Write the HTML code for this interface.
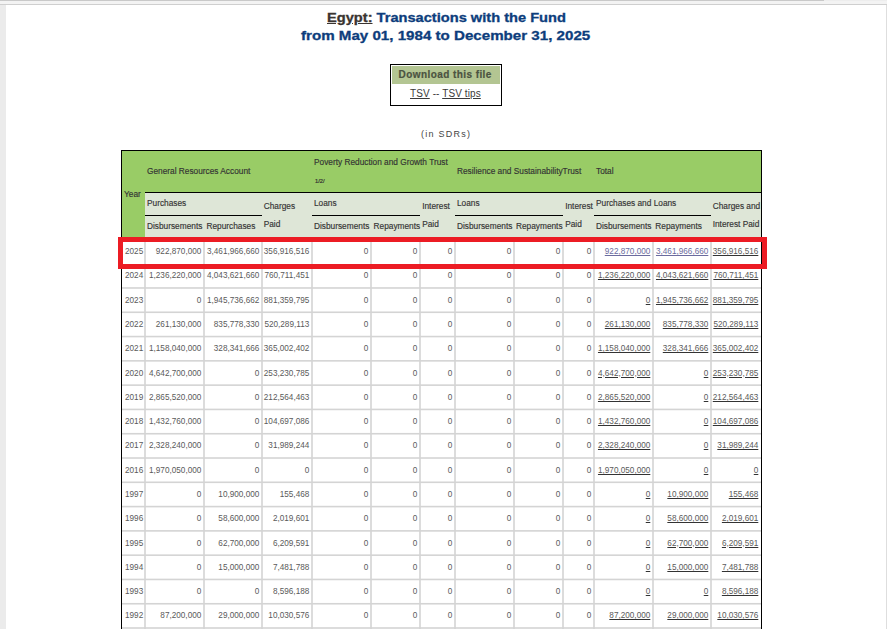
<!DOCTYPE html>
<html><head><meta charset="utf-8"><style>
html,body{margin:0;padding:0;width:887px;height:629px;overflow:hidden;background:#fff}
body>div{position:absolute}
.t{position:absolute;white-space:nowrap;font-family:"Liberation Sans", sans-serif}
</style></head><body>
<div style="left:0px;top:0px;width:887px;height:629px;background:#ffffff"></div>
<div style="left:0px;top:0px;width:824px;height:1px;background:#c9c9c9"></div>
<div style="left:824px;top:0px;width:63px;height:1px;background:#ededed"></div>
<div style="left:0px;top:1px;width:887px;height:3px;background:#f3f3f3"></div>
<div style="left:0px;top:4px;width:887px;height:1px;background:#cfcfcf"></div>
<div style="left:0px;top:5px;width:6px;height:624px;background:#ebebeb"></div>
<div style="left:886px;top:5px;width:1px;height:624px;background:#dedede"></div>
<div class="t" style="left:327.00px;top:12.02px;font-size:12.5px;line-height:12.5px;color:#0d3d7c;font-weight:700;letter-spacing:0px;-webkit-text-stroke:0.3px;transform:scaleX(1.17);transform-origin:0 0"><span style="color:#3a3430;text-decoration:underline">Egypt:</span> Transactions with the Fund</div>
<div class="t" style="left:301.00px;top:30.42px;font-size:12.5px;line-height:12.5px;color:#0d3d7c;font-weight:700;letter-spacing:0px;-webkit-text-stroke:0.3px;transform:scaleX(1.21);transform-origin:0 0">from May 01, 1984 to December 31, 2025</div>
<div style="left:390px;top:64px;width:112px;height:42px;background:#000"></div>
<div style="left:391px;top:65px;width:110px;height:40px;background:#fff"></div>
<div style="left:392px;top:66px;width:108px;height:18px;background:#b3c592"></div>
<div class="t" style="left:398.50px;top:69.83px;font-size:10px;line-height:10px;color:#4b5341;font-weight:700;letter-spacing:0.43px;-webkit-text-stroke:0.2px #4b5341">Download this file</div>
<div class="t" style="left:410.00px;top:89.44px;font-size:10px;line-height:10px;color:#3a3a3a;font-weight:400;letter-spacing:0.1px;"><u>TSV</u> -- <u>TSV tips</u></div>
<div class="t" style="left:421.00px;top:129.78px;font-size:9px;line-height:9px;color:#444;font-weight:400;letter-spacing:1.25px;">(in SDRs)</div>
<div style="left:121px;top:150px;width:641px;height:479px;background:#000"></div>
<div style="left:122px;top:151px;width:639px;height:478px;background:#fff"></div>
<div style="left:122px;top:151px;width:639px;height:41px;background:#99cc66"></div>
<div style="left:122px;top:151px;width:23px;height:88px;background:#99cc66"></div>
<div style="left:145px;top:192px;width:616px;height:1px;background:#000"></div>
<div style="left:145px;top:193px;width:616px;height:46px;background:#dee6d7"></div>
<div style="left:145px;top:215px;width:117px;height:1px;background:#000"></div>
<div style="left:312px;top:215px;width:108px;height:1px;background:#000"></div>
<div style="left:455px;top:215px;width:108px;height:1px;background:#000"></div>
<div style="left:594px;top:215px;width:117px;height:1px;background:#000"></div>
<div class="t" style="left:147.00px;top:167.47px;font-size:8.3px;line-height:8.3px;color:#333;font-weight:400;letter-spacing:0px;-webkit-text-stroke:0.15px #333">General Resources Account</div>
<div class="t" style="left:314.00px;top:158.07px;font-size:8.3px;line-height:8.3px;color:#333;font-weight:400;letter-spacing:0px;-webkit-text-stroke:0.15px #333">Poverty Reduction and Growth Trust</div>
<div class="t" style="left:315.00px;top:178.99px;font-size:5.8px;line-height:5.8px;color:#333;font-weight:400;letter-spacing:0px;-webkit-text-stroke:0.2px #333">1/2/</div>
<div class="t" style="left:457.00px;top:167.17px;font-size:8.3px;line-height:8.3px;color:#333;font-weight:400;letter-spacing:0px;-webkit-text-stroke:0.15px #333">Resilience and SustainabilityTrust</div>
<div class="t" style="left:596.00px;top:167.17px;font-size:8.3px;line-height:8.3px;color:#333;font-weight:400;letter-spacing:0px;-webkit-text-stroke:0.15px #333">Total</div>
<div class="t" style="left:124.00px;top:190.37px;font-size:8.3px;line-height:8.3px;color:#333;font-weight:400;letter-spacing:0px;-webkit-text-stroke:0.15px #333">Year</div>
<div class="t" style="left:147.00px;top:199.27px;font-size:8.3px;line-height:8.3px;color:#333;font-weight:400;letter-spacing:0px;-webkit-text-stroke:0.15px #333">Purchases</div>
<div class="t" style="left:314.00px;top:199.27px;font-size:8.3px;line-height:8.3px;color:#333;font-weight:400;letter-spacing:0px;-webkit-text-stroke:0.15px #333">Loans</div>
<div class="t" style="left:457.00px;top:199.27px;font-size:8.3px;line-height:8.3px;color:#333;font-weight:400;letter-spacing:0px;-webkit-text-stroke:0.15px #333">Loans</div>
<div class="t" style="left:596.00px;top:199.27px;font-size:8.3px;line-height:8.3px;color:#333;font-weight:400;letter-spacing:0px;-webkit-text-stroke:0.15px #333">Purchases and Loans</div>
<div class="t" style="left:147.00px;top:222.17px;font-size:8.3px;line-height:8.3px;color:#333;font-weight:400;letter-spacing:0px;-webkit-text-stroke:0.15px #333">Disbursements</div>
<div class="t" style="left:206.50px;top:222.17px;font-size:8.3px;line-height:8.3px;color:#333;font-weight:400;letter-spacing:0px;-webkit-text-stroke:0.15px #333">Repurchases</div>
<div class="t" style="left:314.00px;top:222.17px;font-size:8.3px;line-height:8.3px;color:#333;font-weight:400;letter-spacing:0px;-webkit-text-stroke:0.15px #333">Disbursements</div>
<div class="t" style="left:373.60px;top:222.17px;font-size:8.3px;line-height:8.3px;color:#333;font-weight:400;letter-spacing:0px;-webkit-text-stroke:0.15px #333">Repayments</div>
<div class="t" style="left:457.00px;top:222.17px;font-size:8.3px;line-height:8.3px;color:#333;font-weight:400;letter-spacing:0px;-webkit-text-stroke:0.15px #333">Disbursements</div>
<div class="t" style="left:516.00px;top:222.17px;font-size:8.3px;line-height:8.3px;color:#333;font-weight:400;letter-spacing:0px;-webkit-text-stroke:0.15px #333">Repayments</div>
<div class="t" style="left:596.00px;top:222.17px;font-size:8.3px;line-height:8.3px;color:#333;font-weight:400;letter-spacing:0px;-webkit-text-stroke:0.15px #333">Disbursements</div>
<div class="t" style="left:655.30px;top:222.17px;font-size:8.3px;line-height:8.3px;color:#333;font-weight:400;letter-spacing:0px;-webkit-text-stroke:0.15px #333">Repayments</div>
<div class="t" style="left:263.70px;top:201.87px;font-size:8.3px;line-height:8.3px;color:#333;font-weight:400;letter-spacing:0px;-webkit-text-stroke:0.15px #333">Charges</div>
<div class="t" style="left:263.70px;top:220.17px;font-size:8.3px;line-height:8.3px;color:#333;font-weight:400;letter-spacing:0px;-webkit-text-stroke:0.15px #333">Paid</div>
<div class="t" style="left:422.20px;top:201.87px;font-size:8.3px;line-height:8.3px;color:#333;font-weight:400;letter-spacing:0px;-webkit-text-stroke:0.15px #333">Interest</div>
<div class="t" style="left:422.20px;top:220.17px;font-size:8.3px;line-height:8.3px;color:#333;font-weight:400;letter-spacing:0px;-webkit-text-stroke:0.15px #333">Paid</div>
<div class="t" style="left:565.20px;top:201.87px;font-size:8.3px;line-height:8.3px;color:#333;font-weight:400;letter-spacing:0px;-webkit-text-stroke:0.15px #333">Interest</div>
<div class="t" style="left:565.20px;top:220.17px;font-size:8.3px;line-height:8.3px;color:#333;font-weight:400;letter-spacing:0px;-webkit-text-stroke:0.15px #333">Paid</div>
<div class="t" style="left:712.70px;top:201.87px;font-size:8.3px;line-height:8.3px;color:#333;font-weight:400;letter-spacing:0px;-webkit-text-stroke:0.15px #333">Charges and</div>
<div class="t" style="left:712.70px;top:220.17px;font-size:8.3px;line-height:8.3px;color:#333;font-weight:400;letter-spacing:0px;-webkit-text-stroke:0.15px #333">Interest Paid</div>
<div class="t" style="left:125.00px;top:248.06px;font-size:8.2px;line-height:8.2px;color:#5a5a5a;font-weight:400;letter-spacing:0px;">2025</div>
<div class="t" style="right:685.70px;top:248.06px;font-size:8.2px;line-height:8.2px;color:#5a5a5a;font-weight:400;letter-spacing:0px;">922,870,000</div>
<div class="t" style="right:627.70px;top:248.06px;font-size:8.2px;line-height:8.2px;color:#5a5a5a;font-weight:400;letter-spacing:0px;">3,461,966,660</div>
<div class="t" style="right:577.70px;top:248.06px;font-size:8.2px;line-height:8.2px;color:#5a5a5a;font-weight:400;letter-spacing:0px;">356,916,516</div>
<div class="t" style="right:518.70px;top:248.06px;font-size:8.2px;line-height:8.2px;color:#5a5a5a;font-weight:400;letter-spacing:0px;">0</div>
<div class="t" style="right:469.70px;top:248.06px;font-size:8.2px;line-height:8.2px;color:#5a5a5a;font-weight:400;letter-spacing:0px;">0</div>
<div class="t" style="right:434.70px;top:248.06px;font-size:8.2px;line-height:8.2px;color:#5a5a5a;font-weight:400;letter-spacing:0px;">0</div>
<div class="t" style="right:375.70px;top:248.06px;font-size:8.2px;line-height:8.2px;color:#5a5a5a;font-weight:400;letter-spacing:0px;">0</div>
<div class="t" style="right:326.70px;top:248.06px;font-size:8.2px;line-height:8.2px;color:#5a5a5a;font-weight:400;letter-spacing:0px;">0</div>
<div class="t" style="right:295.70px;top:248.06px;font-size:8.2px;line-height:8.2px;color:#5a5a5a;font-weight:400;letter-spacing:0px;">0</div>
<div class="t" style="right:236.70px;top:248.06px;font-size:8.2px;line-height:8.2px;color:#6b6b9e;font-weight:400;letter-spacing:0px;"><span style="text-decoration:underline;text-decoration-color:#6b6b9e">922,870,000</span></div>
<div class="t" style="right:178.70px;top:248.06px;font-size:8.2px;line-height:8.2px;color:#6b6b9e;font-weight:400;letter-spacing:0px;"><span style="text-decoration:underline;text-decoration-color:#6b6b9e">3,461,966,660</span></div>
<div class="t" style="right:128.70px;top:248.06px;font-size:8.2px;line-height:8.2px;color:#5a5a5a;font-weight:400;letter-spacing:0px;"><span style="text-decoration:underline;text-decoration-color:#333">356,916,516</span></div>
<div class="t" style="left:125.00px;top:272.35px;font-size:8.2px;line-height:8.2px;color:#5a5a5a;font-weight:400;letter-spacing:0px;">2024</div>
<div class="t" style="right:685.70px;top:272.35px;font-size:8.2px;line-height:8.2px;color:#5a5a5a;font-weight:400;letter-spacing:0px;">1,236,220,000</div>
<div class="t" style="right:627.70px;top:272.35px;font-size:8.2px;line-height:8.2px;color:#5a5a5a;font-weight:400;letter-spacing:0px;">4,043,621,660</div>
<div class="t" style="right:577.70px;top:272.35px;font-size:8.2px;line-height:8.2px;color:#5a5a5a;font-weight:400;letter-spacing:0px;">760,711,451</div>
<div class="t" style="right:518.70px;top:272.35px;font-size:8.2px;line-height:8.2px;color:#5a5a5a;font-weight:400;letter-spacing:0px;">0</div>
<div class="t" style="right:469.70px;top:272.35px;font-size:8.2px;line-height:8.2px;color:#5a5a5a;font-weight:400;letter-spacing:0px;">0</div>
<div class="t" style="right:434.70px;top:272.35px;font-size:8.2px;line-height:8.2px;color:#5a5a5a;font-weight:400;letter-spacing:0px;">0</div>
<div class="t" style="right:375.70px;top:272.35px;font-size:8.2px;line-height:8.2px;color:#5a5a5a;font-weight:400;letter-spacing:0px;">0</div>
<div class="t" style="right:326.70px;top:272.35px;font-size:8.2px;line-height:8.2px;color:#5a5a5a;font-weight:400;letter-spacing:0px;">0</div>
<div class="t" style="right:295.70px;top:272.35px;font-size:8.2px;line-height:8.2px;color:#5a5a5a;font-weight:400;letter-spacing:0px;">0</div>
<div class="t" style="right:236.70px;top:272.35px;font-size:8.2px;line-height:8.2px;color:#5a5a5a;font-weight:400;letter-spacing:0px;"><span style="text-decoration:underline;text-decoration-color:#333">1,236,220,000</span></div>
<div class="t" style="right:178.70px;top:272.35px;font-size:8.2px;line-height:8.2px;color:#5a5a5a;font-weight:400;letter-spacing:0px;"><span style="text-decoration:underline;text-decoration-color:#333">4,043,621,660</span></div>
<div class="t" style="right:128.70px;top:272.35px;font-size:8.2px;line-height:8.2px;color:#5a5a5a;font-weight:400;letter-spacing:0px;"><span style="text-decoration:underline;text-decoration-color:#333">760,711,451</span></div>
<div class="t" style="left:125.00px;top:296.64px;font-size:8.2px;line-height:8.2px;color:#5a5a5a;font-weight:400;letter-spacing:0px;">2023</div>
<div class="t" style="right:685.70px;top:296.64px;font-size:8.2px;line-height:8.2px;color:#5a5a5a;font-weight:400;letter-spacing:0px;">0</div>
<div class="t" style="right:627.70px;top:296.64px;font-size:8.2px;line-height:8.2px;color:#5a5a5a;font-weight:400;letter-spacing:0px;">1,945,736,662</div>
<div class="t" style="right:577.70px;top:296.64px;font-size:8.2px;line-height:8.2px;color:#5a5a5a;font-weight:400;letter-spacing:0px;">881,359,795</div>
<div class="t" style="right:518.70px;top:296.64px;font-size:8.2px;line-height:8.2px;color:#5a5a5a;font-weight:400;letter-spacing:0px;">0</div>
<div class="t" style="right:469.70px;top:296.64px;font-size:8.2px;line-height:8.2px;color:#5a5a5a;font-weight:400;letter-spacing:0px;">0</div>
<div class="t" style="right:434.70px;top:296.64px;font-size:8.2px;line-height:8.2px;color:#5a5a5a;font-weight:400;letter-spacing:0px;">0</div>
<div class="t" style="right:375.70px;top:296.64px;font-size:8.2px;line-height:8.2px;color:#5a5a5a;font-weight:400;letter-spacing:0px;">0</div>
<div class="t" style="right:326.70px;top:296.64px;font-size:8.2px;line-height:8.2px;color:#5a5a5a;font-weight:400;letter-spacing:0px;">0</div>
<div class="t" style="right:295.70px;top:296.64px;font-size:8.2px;line-height:8.2px;color:#5a5a5a;font-weight:400;letter-spacing:0px;">0</div>
<div class="t" style="right:236.70px;top:296.64px;font-size:8.2px;line-height:8.2px;color:#5a5a5a;font-weight:400;letter-spacing:0px;"><span style="text-decoration:underline;text-decoration-color:#333">0</span></div>
<div class="t" style="right:178.70px;top:296.64px;font-size:8.2px;line-height:8.2px;color:#5a5a5a;font-weight:400;letter-spacing:0px;"><span style="text-decoration:underline;text-decoration-color:#333">1,945,736,662</span></div>
<div class="t" style="right:128.70px;top:296.64px;font-size:8.2px;line-height:8.2px;color:#5a5a5a;font-weight:400;letter-spacing:0px;"><span style="text-decoration:underline;text-decoration-color:#333">881,359,795</span></div>
<div class="t" style="left:125.00px;top:320.93px;font-size:8.2px;line-height:8.2px;color:#5a5a5a;font-weight:400;letter-spacing:0px;">2022</div>
<div class="t" style="right:685.70px;top:320.93px;font-size:8.2px;line-height:8.2px;color:#5a5a5a;font-weight:400;letter-spacing:0px;">261,130,000</div>
<div class="t" style="right:627.70px;top:320.93px;font-size:8.2px;line-height:8.2px;color:#5a5a5a;font-weight:400;letter-spacing:0px;">835,778,330</div>
<div class="t" style="right:577.70px;top:320.93px;font-size:8.2px;line-height:8.2px;color:#5a5a5a;font-weight:400;letter-spacing:0px;">520,289,113</div>
<div class="t" style="right:518.70px;top:320.93px;font-size:8.2px;line-height:8.2px;color:#5a5a5a;font-weight:400;letter-spacing:0px;">0</div>
<div class="t" style="right:469.70px;top:320.93px;font-size:8.2px;line-height:8.2px;color:#5a5a5a;font-weight:400;letter-spacing:0px;">0</div>
<div class="t" style="right:434.70px;top:320.93px;font-size:8.2px;line-height:8.2px;color:#5a5a5a;font-weight:400;letter-spacing:0px;">0</div>
<div class="t" style="right:375.70px;top:320.93px;font-size:8.2px;line-height:8.2px;color:#5a5a5a;font-weight:400;letter-spacing:0px;">0</div>
<div class="t" style="right:326.70px;top:320.93px;font-size:8.2px;line-height:8.2px;color:#5a5a5a;font-weight:400;letter-spacing:0px;">0</div>
<div class="t" style="right:295.70px;top:320.93px;font-size:8.2px;line-height:8.2px;color:#5a5a5a;font-weight:400;letter-spacing:0px;">0</div>
<div class="t" style="right:236.70px;top:320.93px;font-size:8.2px;line-height:8.2px;color:#5a5a5a;font-weight:400;letter-spacing:0px;"><span style="text-decoration:underline;text-decoration-color:#333">261,130,000</span></div>
<div class="t" style="right:178.70px;top:320.93px;font-size:8.2px;line-height:8.2px;color:#5a5a5a;font-weight:400;letter-spacing:0px;"><span style="text-decoration:underline;text-decoration-color:#333">835,778,330</span></div>
<div class="t" style="right:128.70px;top:320.93px;font-size:8.2px;line-height:8.2px;color:#5a5a5a;font-weight:400;letter-spacing:0px;"><span style="text-decoration:underline;text-decoration-color:#333">520,289,113</span></div>
<div class="t" style="left:125.00px;top:345.22px;font-size:8.2px;line-height:8.2px;color:#5a5a5a;font-weight:400;letter-spacing:0px;">2021</div>
<div class="t" style="right:685.70px;top:345.22px;font-size:8.2px;line-height:8.2px;color:#5a5a5a;font-weight:400;letter-spacing:0px;">1,158,040,000</div>
<div class="t" style="right:627.70px;top:345.22px;font-size:8.2px;line-height:8.2px;color:#5a5a5a;font-weight:400;letter-spacing:0px;">328,341,666</div>
<div class="t" style="right:577.70px;top:345.22px;font-size:8.2px;line-height:8.2px;color:#5a5a5a;font-weight:400;letter-spacing:0px;">365,002,402</div>
<div class="t" style="right:518.70px;top:345.22px;font-size:8.2px;line-height:8.2px;color:#5a5a5a;font-weight:400;letter-spacing:0px;">0</div>
<div class="t" style="right:469.70px;top:345.22px;font-size:8.2px;line-height:8.2px;color:#5a5a5a;font-weight:400;letter-spacing:0px;">0</div>
<div class="t" style="right:434.70px;top:345.22px;font-size:8.2px;line-height:8.2px;color:#5a5a5a;font-weight:400;letter-spacing:0px;">0</div>
<div class="t" style="right:375.70px;top:345.22px;font-size:8.2px;line-height:8.2px;color:#5a5a5a;font-weight:400;letter-spacing:0px;">0</div>
<div class="t" style="right:326.70px;top:345.22px;font-size:8.2px;line-height:8.2px;color:#5a5a5a;font-weight:400;letter-spacing:0px;">0</div>
<div class="t" style="right:295.70px;top:345.22px;font-size:8.2px;line-height:8.2px;color:#5a5a5a;font-weight:400;letter-spacing:0px;">0</div>
<div class="t" style="right:236.70px;top:345.22px;font-size:8.2px;line-height:8.2px;color:#5a5a5a;font-weight:400;letter-spacing:0px;"><span style="text-decoration:underline;text-decoration-color:#333">1,158,040,000</span></div>
<div class="t" style="right:178.70px;top:345.22px;font-size:8.2px;line-height:8.2px;color:#5a5a5a;font-weight:400;letter-spacing:0px;"><span style="text-decoration:underline;text-decoration-color:#333">328,341,666</span></div>
<div class="t" style="right:128.70px;top:345.22px;font-size:8.2px;line-height:8.2px;color:#5a5a5a;font-weight:400;letter-spacing:0px;"><span style="text-decoration:underline;text-decoration-color:#333">365,002,402</span></div>
<div class="t" style="left:125.00px;top:369.51px;font-size:8.2px;line-height:8.2px;color:#5a5a5a;font-weight:400;letter-spacing:0px;">2020</div>
<div class="t" style="right:685.70px;top:369.51px;font-size:8.2px;line-height:8.2px;color:#5a5a5a;font-weight:400;letter-spacing:0px;">4,642,700,000</div>
<div class="t" style="right:627.70px;top:369.51px;font-size:8.2px;line-height:8.2px;color:#5a5a5a;font-weight:400;letter-spacing:0px;">0</div>
<div class="t" style="right:577.70px;top:369.51px;font-size:8.2px;line-height:8.2px;color:#5a5a5a;font-weight:400;letter-spacing:0px;">253,230,785</div>
<div class="t" style="right:518.70px;top:369.51px;font-size:8.2px;line-height:8.2px;color:#5a5a5a;font-weight:400;letter-spacing:0px;">0</div>
<div class="t" style="right:469.70px;top:369.51px;font-size:8.2px;line-height:8.2px;color:#5a5a5a;font-weight:400;letter-spacing:0px;">0</div>
<div class="t" style="right:434.70px;top:369.51px;font-size:8.2px;line-height:8.2px;color:#5a5a5a;font-weight:400;letter-spacing:0px;">0</div>
<div class="t" style="right:375.70px;top:369.51px;font-size:8.2px;line-height:8.2px;color:#5a5a5a;font-weight:400;letter-spacing:0px;">0</div>
<div class="t" style="right:326.70px;top:369.51px;font-size:8.2px;line-height:8.2px;color:#5a5a5a;font-weight:400;letter-spacing:0px;">0</div>
<div class="t" style="right:295.70px;top:369.51px;font-size:8.2px;line-height:8.2px;color:#5a5a5a;font-weight:400;letter-spacing:0px;">0</div>
<div class="t" style="right:236.70px;top:369.51px;font-size:8.2px;line-height:8.2px;color:#5a5a5a;font-weight:400;letter-spacing:0px;"><span style="text-decoration:underline;text-decoration-color:#333">4,642,700,000</span></div>
<div class="t" style="right:178.70px;top:369.51px;font-size:8.2px;line-height:8.2px;color:#5a5a5a;font-weight:400;letter-spacing:0px;"><span style="text-decoration:underline;text-decoration-color:#333">0</span></div>
<div class="t" style="right:128.70px;top:369.51px;font-size:8.2px;line-height:8.2px;color:#5a5a5a;font-weight:400;letter-spacing:0px;"><span style="text-decoration:underline;text-decoration-color:#333">253,230,785</span></div>
<div class="t" style="left:125.00px;top:393.80px;font-size:8.2px;line-height:8.2px;color:#5a5a5a;font-weight:400;letter-spacing:0px;">2019</div>
<div class="t" style="right:685.70px;top:393.80px;font-size:8.2px;line-height:8.2px;color:#5a5a5a;font-weight:400;letter-spacing:0px;">2,865,520,000</div>
<div class="t" style="right:627.70px;top:393.80px;font-size:8.2px;line-height:8.2px;color:#5a5a5a;font-weight:400;letter-spacing:0px;">0</div>
<div class="t" style="right:577.70px;top:393.80px;font-size:8.2px;line-height:8.2px;color:#5a5a5a;font-weight:400;letter-spacing:0px;">212,564,463</div>
<div class="t" style="right:518.70px;top:393.80px;font-size:8.2px;line-height:8.2px;color:#5a5a5a;font-weight:400;letter-spacing:0px;">0</div>
<div class="t" style="right:469.70px;top:393.80px;font-size:8.2px;line-height:8.2px;color:#5a5a5a;font-weight:400;letter-spacing:0px;">0</div>
<div class="t" style="right:434.70px;top:393.80px;font-size:8.2px;line-height:8.2px;color:#5a5a5a;font-weight:400;letter-spacing:0px;">0</div>
<div class="t" style="right:375.70px;top:393.80px;font-size:8.2px;line-height:8.2px;color:#5a5a5a;font-weight:400;letter-spacing:0px;">0</div>
<div class="t" style="right:326.70px;top:393.80px;font-size:8.2px;line-height:8.2px;color:#5a5a5a;font-weight:400;letter-spacing:0px;">0</div>
<div class="t" style="right:295.70px;top:393.80px;font-size:8.2px;line-height:8.2px;color:#5a5a5a;font-weight:400;letter-spacing:0px;">0</div>
<div class="t" style="right:236.70px;top:393.80px;font-size:8.2px;line-height:8.2px;color:#5a5a5a;font-weight:400;letter-spacing:0px;"><span style="text-decoration:underline;text-decoration-color:#333">2,865,520,000</span></div>
<div class="t" style="right:178.70px;top:393.80px;font-size:8.2px;line-height:8.2px;color:#5a5a5a;font-weight:400;letter-spacing:0px;"><span style="text-decoration:underline;text-decoration-color:#333">0</span></div>
<div class="t" style="right:128.70px;top:393.80px;font-size:8.2px;line-height:8.2px;color:#5a5a5a;font-weight:400;letter-spacing:0px;"><span style="text-decoration:underline;text-decoration-color:#333">212,564,463</span></div>
<div class="t" style="left:125.00px;top:418.09px;font-size:8.2px;line-height:8.2px;color:#5a5a5a;font-weight:400;letter-spacing:0px;">2018</div>
<div class="t" style="right:685.70px;top:418.09px;font-size:8.2px;line-height:8.2px;color:#5a5a5a;font-weight:400;letter-spacing:0px;">1,432,760,000</div>
<div class="t" style="right:627.70px;top:418.09px;font-size:8.2px;line-height:8.2px;color:#5a5a5a;font-weight:400;letter-spacing:0px;">0</div>
<div class="t" style="right:577.70px;top:418.09px;font-size:8.2px;line-height:8.2px;color:#5a5a5a;font-weight:400;letter-spacing:0px;">104,697,086</div>
<div class="t" style="right:518.70px;top:418.09px;font-size:8.2px;line-height:8.2px;color:#5a5a5a;font-weight:400;letter-spacing:0px;">0</div>
<div class="t" style="right:469.70px;top:418.09px;font-size:8.2px;line-height:8.2px;color:#5a5a5a;font-weight:400;letter-spacing:0px;">0</div>
<div class="t" style="right:434.70px;top:418.09px;font-size:8.2px;line-height:8.2px;color:#5a5a5a;font-weight:400;letter-spacing:0px;">0</div>
<div class="t" style="right:375.70px;top:418.09px;font-size:8.2px;line-height:8.2px;color:#5a5a5a;font-weight:400;letter-spacing:0px;">0</div>
<div class="t" style="right:326.70px;top:418.09px;font-size:8.2px;line-height:8.2px;color:#5a5a5a;font-weight:400;letter-spacing:0px;">0</div>
<div class="t" style="right:295.70px;top:418.09px;font-size:8.2px;line-height:8.2px;color:#5a5a5a;font-weight:400;letter-spacing:0px;">0</div>
<div class="t" style="right:236.70px;top:418.09px;font-size:8.2px;line-height:8.2px;color:#5a5a5a;font-weight:400;letter-spacing:0px;"><span style="text-decoration:underline;text-decoration-color:#333">1,432,760,000</span></div>
<div class="t" style="right:178.70px;top:418.09px;font-size:8.2px;line-height:8.2px;color:#5a5a5a;font-weight:400;letter-spacing:0px;"><span style="text-decoration:underline;text-decoration-color:#333">0</span></div>
<div class="t" style="right:128.70px;top:418.09px;font-size:8.2px;line-height:8.2px;color:#5a5a5a;font-weight:400;letter-spacing:0px;"><span style="text-decoration:underline;text-decoration-color:#333">104,697,086</span></div>
<div class="t" style="left:125.00px;top:442.38px;font-size:8.2px;line-height:8.2px;color:#5a5a5a;font-weight:400;letter-spacing:0px;">2017</div>
<div class="t" style="right:685.70px;top:442.38px;font-size:8.2px;line-height:8.2px;color:#5a5a5a;font-weight:400;letter-spacing:0px;">2,328,240,000</div>
<div class="t" style="right:627.70px;top:442.38px;font-size:8.2px;line-height:8.2px;color:#5a5a5a;font-weight:400;letter-spacing:0px;">0</div>
<div class="t" style="right:577.70px;top:442.38px;font-size:8.2px;line-height:8.2px;color:#5a5a5a;font-weight:400;letter-spacing:0px;">31,989,244</div>
<div class="t" style="right:518.70px;top:442.38px;font-size:8.2px;line-height:8.2px;color:#5a5a5a;font-weight:400;letter-spacing:0px;">0</div>
<div class="t" style="right:469.70px;top:442.38px;font-size:8.2px;line-height:8.2px;color:#5a5a5a;font-weight:400;letter-spacing:0px;">0</div>
<div class="t" style="right:434.70px;top:442.38px;font-size:8.2px;line-height:8.2px;color:#5a5a5a;font-weight:400;letter-spacing:0px;">0</div>
<div class="t" style="right:375.70px;top:442.38px;font-size:8.2px;line-height:8.2px;color:#5a5a5a;font-weight:400;letter-spacing:0px;">0</div>
<div class="t" style="right:326.70px;top:442.38px;font-size:8.2px;line-height:8.2px;color:#5a5a5a;font-weight:400;letter-spacing:0px;">0</div>
<div class="t" style="right:295.70px;top:442.38px;font-size:8.2px;line-height:8.2px;color:#5a5a5a;font-weight:400;letter-spacing:0px;">0</div>
<div class="t" style="right:236.70px;top:442.38px;font-size:8.2px;line-height:8.2px;color:#5a5a5a;font-weight:400;letter-spacing:0px;"><span style="text-decoration:underline;text-decoration-color:#333">2,328,240,000</span></div>
<div class="t" style="right:178.70px;top:442.38px;font-size:8.2px;line-height:8.2px;color:#5a5a5a;font-weight:400;letter-spacing:0px;"><span style="text-decoration:underline;text-decoration-color:#333">0</span></div>
<div class="t" style="right:128.70px;top:442.38px;font-size:8.2px;line-height:8.2px;color:#5a5a5a;font-weight:400;letter-spacing:0px;"><span style="text-decoration:underline;text-decoration-color:#333">31,989,244</span></div>
<div class="t" style="left:125.00px;top:466.67px;font-size:8.2px;line-height:8.2px;color:#5a5a5a;font-weight:400;letter-spacing:0px;">2016</div>
<div class="t" style="right:685.70px;top:466.67px;font-size:8.2px;line-height:8.2px;color:#5a5a5a;font-weight:400;letter-spacing:0px;">1,970,050,000</div>
<div class="t" style="right:627.70px;top:466.67px;font-size:8.2px;line-height:8.2px;color:#5a5a5a;font-weight:400;letter-spacing:0px;">0</div>
<div class="t" style="right:577.70px;top:466.67px;font-size:8.2px;line-height:8.2px;color:#5a5a5a;font-weight:400;letter-spacing:0px;">0</div>
<div class="t" style="right:518.70px;top:466.67px;font-size:8.2px;line-height:8.2px;color:#5a5a5a;font-weight:400;letter-spacing:0px;">0</div>
<div class="t" style="right:469.70px;top:466.67px;font-size:8.2px;line-height:8.2px;color:#5a5a5a;font-weight:400;letter-spacing:0px;">0</div>
<div class="t" style="right:434.70px;top:466.67px;font-size:8.2px;line-height:8.2px;color:#5a5a5a;font-weight:400;letter-spacing:0px;">0</div>
<div class="t" style="right:375.70px;top:466.67px;font-size:8.2px;line-height:8.2px;color:#5a5a5a;font-weight:400;letter-spacing:0px;">0</div>
<div class="t" style="right:326.70px;top:466.67px;font-size:8.2px;line-height:8.2px;color:#5a5a5a;font-weight:400;letter-spacing:0px;">0</div>
<div class="t" style="right:295.70px;top:466.67px;font-size:8.2px;line-height:8.2px;color:#5a5a5a;font-weight:400;letter-spacing:0px;">0</div>
<div class="t" style="right:236.70px;top:466.67px;font-size:8.2px;line-height:8.2px;color:#5a5a5a;font-weight:400;letter-spacing:0px;"><span style="text-decoration:underline;text-decoration-color:#333">1,970,050,000</span></div>
<div class="t" style="right:178.70px;top:466.67px;font-size:8.2px;line-height:8.2px;color:#5a5a5a;font-weight:400;letter-spacing:0px;"><span style="text-decoration:underline;text-decoration-color:#333">0</span></div>
<div class="t" style="right:128.70px;top:466.67px;font-size:8.2px;line-height:8.2px;color:#5a5a5a;font-weight:400;letter-spacing:0px;"><span style="text-decoration:underline;text-decoration-color:#333">0</span></div>
<div class="t" style="left:125.00px;top:490.96px;font-size:8.2px;line-height:8.2px;color:#5a5a5a;font-weight:400;letter-spacing:0px;">1997</div>
<div class="t" style="right:685.70px;top:490.96px;font-size:8.2px;line-height:8.2px;color:#5a5a5a;font-weight:400;letter-spacing:0px;">0</div>
<div class="t" style="right:627.70px;top:490.96px;font-size:8.2px;line-height:8.2px;color:#5a5a5a;font-weight:400;letter-spacing:0px;">10,900,000</div>
<div class="t" style="right:577.70px;top:490.96px;font-size:8.2px;line-height:8.2px;color:#5a5a5a;font-weight:400;letter-spacing:0px;">155,468</div>
<div class="t" style="right:518.70px;top:490.96px;font-size:8.2px;line-height:8.2px;color:#5a5a5a;font-weight:400;letter-spacing:0px;">0</div>
<div class="t" style="right:469.70px;top:490.96px;font-size:8.2px;line-height:8.2px;color:#5a5a5a;font-weight:400;letter-spacing:0px;">0</div>
<div class="t" style="right:434.70px;top:490.96px;font-size:8.2px;line-height:8.2px;color:#5a5a5a;font-weight:400;letter-spacing:0px;">0</div>
<div class="t" style="right:375.70px;top:490.96px;font-size:8.2px;line-height:8.2px;color:#5a5a5a;font-weight:400;letter-spacing:0px;">0</div>
<div class="t" style="right:326.70px;top:490.96px;font-size:8.2px;line-height:8.2px;color:#5a5a5a;font-weight:400;letter-spacing:0px;">0</div>
<div class="t" style="right:295.70px;top:490.96px;font-size:8.2px;line-height:8.2px;color:#5a5a5a;font-weight:400;letter-spacing:0px;">0</div>
<div class="t" style="right:236.70px;top:490.96px;font-size:8.2px;line-height:8.2px;color:#5a5a5a;font-weight:400;letter-spacing:0px;"><span style="text-decoration:underline;text-decoration-color:#333">0</span></div>
<div class="t" style="right:178.70px;top:490.96px;font-size:8.2px;line-height:8.2px;color:#5a5a5a;font-weight:400;letter-spacing:0px;"><span style="text-decoration:underline;text-decoration-color:#333">10,900,000</span></div>
<div class="t" style="right:128.70px;top:490.96px;font-size:8.2px;line-height:8.2px;color:#5a5a5a;font-weight:400;letter-spacing:0px;"><span style="text-decoration:underline;text-decoration-color:#333">155,468</span></div>
<div class="t" style="left:125.00px;top:515.25px;font-size:8.2px;line-height:8.2px;color:#5a5a5a;font-weight:400;letter-spacing:0px;">1996</div>
<div class="t" style="right:685.70px;top:515.25px;font-size:8.2px;line-height:8.2px;color:#5a5a5a;font-weight:400;letter-spacing:0px;">0</div>
<div class="t" style="right:627.70px;top:515.25px;font-size:8.2px;line-height:8.2px;color:#5a5a5a;font-weight:400;letter-spacing:0px;">58,600,000</div>
<div class="t" style="right:577.70px;top:515.25px;font-size:8.2px;line-height:8.2px;color:#5a5a5a;font-weight:400;letter-spacing:0px;">2,019,601</div>
<div class="t" style="right:518.70px;top:515.25px;font-size:8.2px;line-height:8.2px;color:#5a5a5a;font-weight:400;letter-spacing:0px;">0</div>
<div class="t" style="right:469.70px;top:515.25px;font-size:8.2px;line-height:8.2px;color:#5a5a5a;font-weight:400;letter-spacing:0px;">0</div>
<div class="t" style="right:434.70px;top:515.25px;font-size:8.2px;line-height:8.2px;color:#5a5a5a;font-weight:400;letter-spacing:0px;">0</div>
<div class="t" style="right:375.70px;top:515.25px;font-size:8.2px;line-height:8.2px;color:#5a5a5a;font-weight:400;letter-spacing:0px;">0</div>
<div class="t" style="right:326.70px;top:515.25px;font-size:8.2px;line-height:8.2px;color:#5a5a5a;font-weight:400;letter-spacing:0px;">0</div>
<div class="t" style="right:295.70px;top:515.25px;font-size:8.2px;line-height:8.2px;color:#5a5a5a;font-weight:400;letter-spacing:0px;">0</div>
<div class="t" style="right:236.70px;top:515.25px;font-size:8.2px;line-height:8.2px;color:#5a5a5a;font-weight:400;letter-spacing:0px;"><span style="text-decoration:underline;text-decoration-color:#333">0</span></div>
<div class="t" style="right:178.70px;top:515.25px;font-size:8.2px;line-height:8.2px;color:#5a5a5a;font-weight:400;letter-spacing:0px;"><span style="text-decoration:underline;text-decoration-color:#333">58,600,000</span></div>
<div class="t" style="right:128.70px;top:515.25px;font-size:8.2px;line-height:8.2px;color:#5a5a5a;font-weight:400;letter-spacing:0px;"><span style="text-decoration:underline;text-decoration-color:#333">2,019,601</span></div>
<div class="t" style="left:125.00px;top:539.54px;font-size:8.2px;line-height:8.2px;color:#5a5a5a;font-weight:400;letter-spacing:0px;">1995</div>
<div class="t" style="right:685.70px;top:539.54px;font-size:8.2px;line-height:8.2px;color:#5a5a5a;font-weight:400;letter-spacing:0px;">0</div>
<div class="t" style="right:627.70px;top:539.54px;font-size:8.2px;line-height:8.2px;color:#5a5a5a;font-weight:400;letter-spacing:0px;">62,700,000</div>
<div class="t" style="right:577.70px;top:539.54px;font-size:8.2px;line-height:8.2px;color:#5a5a5a;font-weight:400;letter-spacing:0px;">6,209,591</div>
<div class="t" style="right:518.70px;top:539.54px;font-size:8.2px;line-height:8.2px;color:#5a5a5a;font-weight:400;letter-spacing:0px;">0</div>
<div class="t" style="right:469.70px;top:539.54px;font-size:8.2px;line-height:8.2px;color:#5a5a5a;font-weight:400;letter-spacing:0px;">0</div>
<div class="t" style="right:434.70px;top:539.54px;font-size:8.2px;line-height:8.2px;color:#5a5a5a;font-weight:400;letter-spacing:0px;">0</div>
<div class="t" style="right:375.70px;top:539.54px;font-size:8.2px;line-height:8.2px;color:#5a5a5a;font-weight:400;letter-spacing:0px;">0</div>
<div class="t" style="right:326.70px;top:539.54px;font-size:8.2px;line-height:8.2px;color:#5a5a5a;font-weight:400;letter-spacing:0px;">0</div>
<div class="t" style="right:295.70px;top:539.54px;font-size:8.2px;line-height:8.2px;color:#5a5a5a;font-weight:400;letter-spacing:0px;">0</div>
<div class="t" style="right:236.70px;top:539.54px;font-size:8.2px;line-height:8.2px;color:#5a5a5a;font-weight:400;letter-spacing:0px;"><span style="text-decoration:underline;text-decoration-color:#333">0</span></div>
<div class="t" style="right:178.70px;top:539.54px;font-size:8.2px;line-height:8.2px;color:#5a5a5a;font-weight:400;letter-spacing:0px;"><span style="text-decoration:underline;text-decoration-color:#333">62,700,000</span></div>
<div class="t" style="right:128.70px;top:539.54px;font-size:8.2px;line-height:8.2px;color:#5a5a5a;font-weight:400;letter-spacing:0px;"><span style="text-decoration:underline;text-decoration-color:#333">6,209,591</span></div>
<div class="t" style="left:125.00px;top:563.83px;font-size:8.2px;line-height:8.2px;color:#5a5a5a;font-weight:400;letter-spacing:0px;">1994</div>
<div class="t" style="right:685.70px;top:563.83px;font-size:8.2px;line-height:8.2px;color:#5a5a5a;font-weight:400;letter-spacing:0px;">0</div>
<div class="t" style="right:627.70px;top:563.83px;font-size:8.2px;line-height:8.2px;color:#5a5a5a;font-weight:400;letter-spacing:0px;">15,000,000</div>
<div class="t" style="right:577.70px;top:563.83px;font-size:8.2px;line-height:8.2px;color:#5a5a5a;font-weight:400;letter-spacing:0px;">7,481,788</div>
<div class="t" style="right:518.70px;top:563.83px;font-size:8.2px;line-height:8.2px;color:#5a5a5a;font-weight:400;letter-spacing:0px;">0</div>
<div class="t" style="right:469.70px;top:563.83px;font-size:8.2px;line-height:8.2px;color:#5a5a5a;font-weight:400;letter-spacing:0px;">0</div>
<div class="t" style="right:434.70px;top:563.83px;font-size:8.2px;line-height:8.2px;color:#5a5a5a;font-weight:400;letter-spacing:0px;">0</div>
<div class="t" style="right:375.70px;top:563.83px;font-size:8.2px;line-height:8.2px;color:#5a5a5a;font-weight:400;letter-spacing:0px;">0</div>
<div class="t" style="right:326.70px;top:563.83px;font-size:8.2px;line-height:8.2px;color:#5a5a5a;font-weight:400;letter-spacing:0px;">0</div>
<div class="t" style="right:295.70px;top:563.83px;font-size:8.2px;line-height:8.2px;color:#5a5a5a;font-weight:400;letter-spacing:0px;">0</div>
<div class="t" style="right:236.70px;top:563.83px;font-size:8.2px;line-height:8.2px;color:#5a5a5a;font-weight:400;letter-spacing:0px;"><span style="text-decoration:underline;text-decoration-color:#333">0</span></div>
<div class="t" style="right:178.70px;top:563.83px;font-size:8.2px;line-height:8.2px;color:#5a5a5a;font-weight:400;letter-spacing:0px;"><span style="text-decoration:underline;text-decoration-color:#333">15,000,000</span></div>
<div class="t" style="right:128.70px;top:563.83px;font-size:8.2px;line-height:8.2px;color:#5a5a5a;font-weight:400;letter-spacing:0px;"><span style="text-decoration:underline;text-decoration-color:#333">7,481,788</span></div>
<div class="t" style="left:125.00px;top:588.12px;font-size:8.2px;line-height:8.2px;color:#5a5a5a;font-weight:400;letter-spacing:0px;">1993</div>
<div class="t" style="right:685.70px;top:588.12px;font-size:8.2px;line-height:8.2px;color:#5a5a5a;font-weight:400;letter-spacing:0px;">0</div>
<div class="t" style="right:627.70px;top:588.12px;font-size:8.2px;line-height:8.2px;color:#5a5a5a;font-weight:400;letter-spacing:0px;">0</div>
<div class="t" style="right:577.70px;top:588.12px;font-size:8.2px;line-height:8.2px;color:#5a5a5a;font-weight:400;letter-spacing:0px;">8,596,188</div>
<div class="t" style="right:518.70px;top:588.12px;font-size:8.2px;line-height:8.2px;color:#5a5a5a;font-weight:400;letter-spacing:0px;">0</div>
<div class="t" style="right:469.70px;top:588.12px;font-size:8.2px;line-height:8.2px;color:#5a5a5a;font-weight:400;letter-spacing:0px;">0</div>
<div class="t" style="right:434.70px;top:588.12px;font-size:8.2px;line-height:8.2px;color:#5a5a5a;font-weight:400;letter-spacing:0px;">0</div>
<div class="t" style="right:375.70px;top:588.12px;font-size:8.2px;line-height:8.2px;color:#5a5a5a;font-weight:400;letter-spacing:0px;">0</div>
<div class="t" style="right:326.70px;top:588.12px;font-size:8.2px;line-height:8.2px;color:#5a5a5a;font-weight:400;letter-spacing:0px;">0</div>
<div class="t" style="right:295.70px;top:588.12px;font-size:8.2px;line-height:8.2px;color:#5a5a5a;font-weight:400;letter-spacing:0px;">0</div>
<div class="t" style="right:236.70px;top:588.12px;font-size:8.2px;line-height:8.2px;color:#5a5a5a;font-weight:400;letter-spacing:0px;"><span style="text-decoration:underline;text-decoration-color:#333">0</span></div>
<div class="t" style="right:178.70px;top:588.12px;font-size:8.2px;line-height:8.2px;color:#5a5a5a;font-weight:400;letter-spacing:0px;"><span style="text-decoration:underline;text-decoration-color:#333">0</span></div>
<div class="t" style="right:128.70px;top:588.12px;font-size:8.2px;line-height:8.2px;color:#5a5a5a;font-weight:400;letter-spacing:0px;"><span style="text-decoration:underline;text-decoration-color:#333">8,596,188</span></div>
<div class="t" style="left:125.00px;top:612.41px;font-size:8.2px;line-height:8.2px;color:#5a5a5a;font-weight:400;letter-spacing:0px;">1992</div>
<div class="t" style="right:685.70px;top:612.41px;font-size:8.2px;line-height:8.2px;color:#5a5a5a;font-weight:400;letter-spacing:0px;">87,200,000</div>
<div class="t" style="right:627.70px;top:612.41px;font-size:8.2px;line-height:8.2px;color:#5a5a5a;font-weight:400;letter-spacing:0px;">29,000,000</div>
<div class="t" style="right:577.70px;top:612.41px;font-size:8.2px;line-height:8.2px;color:#5a5a5a;font-weight:400;letter-spacing:0px;">10,030,576</div>
<div class="t" style="right:518.70px;top:612.41px;font-size:8.2px;line-height:8.2px;color:#5a5a5a;font-weight:400;letter-spacing:0px;">0</div>
<div class="t" style="right:469.70px;top:612.41px;font-size:8.2px;line-height:8.2px;color:#5a5a5a;font-weight:400;letter-spacing:0px;">0</div>
<div class="t" style="right:434.70px;top:612.41px;font-size:8.2px;line-height:8.2px;color:#5a5a5a;font-weight:400;letter-spacing:0px;">0</div>
<div class="t" style="right:375.70px;top:612.41px;font-size:8.2px;line-height:8.2px;color:#5a5a5a;font-weight:400;letter-spacing:0px;">0</div>
<div class="t" style="right:326.70px;top:612.41px;font-size:8.2px;line-height:8.2px;color:#5a5a5a;font-weight:400;letter-spacing:0px;">0</div>
<div class="t" style="right:295.70px;top:612.41px;font-size:8.2px;line-height:8.2px;color:#5a5a5a;font-weight:400;letter-spacing:0px;">0</div>
<div class="t" style="right:236.70px;top:612.41px;font-size:8.2px;line-height:8.2px;color:#5a5a5a;font-weight:400;letter-spacing:0px;"><span style="text-decoration:underline;text-decoration-color:#333">87,200,000</span></div>
<div class="t" style="right:178.70px;top:612.41px;font-size:8.2px;line-height:8.2px;color:#5a5a5a;font-weight:400;letter-spacing:0px;"><span style="text-decoration:underline;text-decoration-color:#333">29,000,000</span></div>
<div class="t" style="right:128.70px;top:612.41px;font-size:8.2px;line-height:8.2px;color:#5a5a5a;font-weight:400;letter-spacing:0px;"><span style="text-decoration:underline;text-decoration-color:#333">10,030,576</span></div>
<svg style="position:absolute;left:0;top:0" width="887" height="629"><rect x="122" y="287.18" width="639" height="1.6" fill="#d4d4d4"/><rect x="122" y="311.47" width="639" height="1.6" fill="#d4d4d4"/><rect x="122" y="335.76" width="639" height="1.6" fill="#d4d4d4"/><rect x="122" y="360.05" width="639" height="1.6" fill="#d4d4d4"/><rect x="122" y="384.34" width="639" height="1.6" fill="#d4d4d4"/><rect x="122" y="408.63" width="639" height="1.6" fill="#d4d4d4"/><rect x="122" y="432.92" width="639" height="1.6" fill="#d4d4d4"/><rect x="122" y="457.21" width="639" height="1.6" fill="#d4d4d4"/><rect x="122" y="481.50" width="639" height="1.6" fill="#d4d4d4"/><rect x="122" y="505.79" width="639" height="1.6" fill="#d4d4d4"/><rect x="122" y="530.08" width="639" height="1.6" fill="#d4d4d4"/><rect x="122" y="554.37" width="639" height="1.6" fill="#d4d4d4"/><rect x="122" y="578.66" width="639" height="1.6" fill="#d4d4d4"/><rect x="122" y="602.95" width="639" height="1.6" fill="#d4d4d4"/><rect x="122" y="627.2" width="639" height="1.6" fill="#d4d4d4"/><rect x="144.20" y="239" width="1.6" height="390" fill="#d4d4d4"/><rect x="203.20" y="239" width="1.6" height="390" fill="#d4d4d4"/><rect x="261.20" y="239" width="1.6" height="390" fill="#d4d4d4"/><rect x="311.20" y="239" width="1.6" height="390" fill="#d4d4d4"/><rect x="370.20" y="239" width="1.6" height="390" fill="#d4d4d4"/><rect x="419.20" y="239" width="1.6" height="390" fill="#d4d4d4"/><rect x="454.20" y="239" width="1.6" height="390" fill="#d4d4d4"/><rect x="513.20" y="239" width="1.6" height="390" fill="#d4d4d4"/><rect x="562.20" y="239" width="1.6" height="390" fill="#d4d4d4"/><rect x="593.20" y="239" width="1.6" height="390" fill="#d4d4d4"/><rect x="652.20" y="239" width="1.6" height="390" fill="#d4d4d4"/><rect x="710.20" y="239" width="1.6" height="390" fill="#d4d4d4"/></svg>
<div style="left:118px;top:237px;width:649px;height:32px;box-sizing:border-box;border:5px solid #ec1c24;background:transparent"></div>
</body></html>
